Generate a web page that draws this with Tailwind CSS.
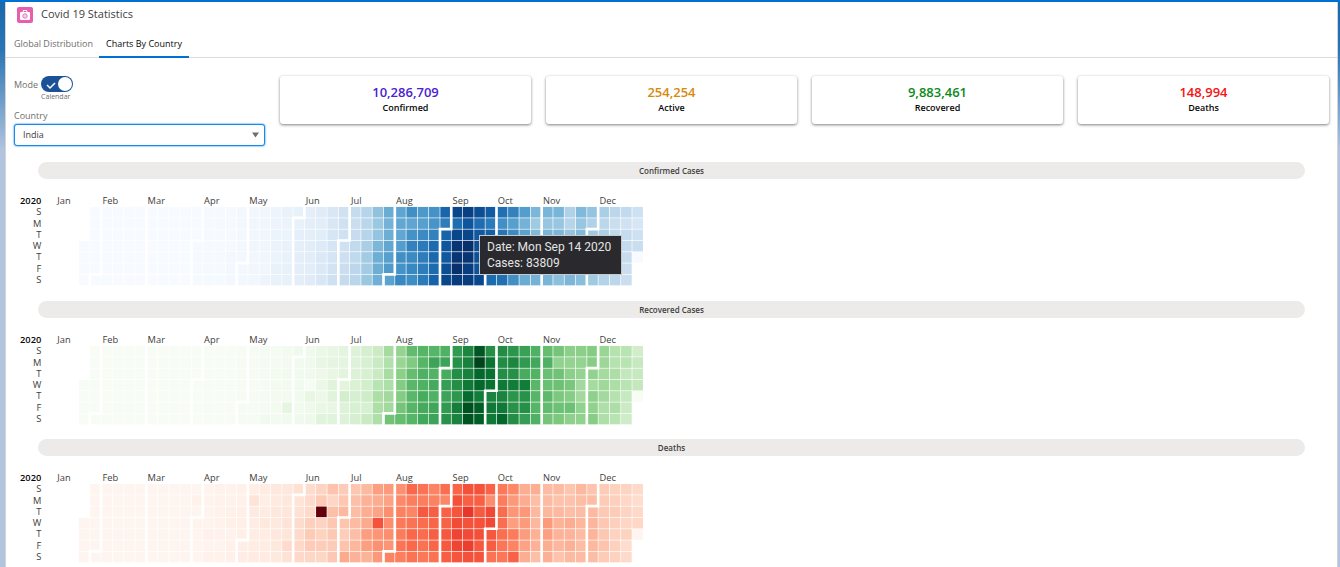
<!DOCTYPE html>
<html lang="en">
<head>
<meta charset="utf-8">
<title>Covid 19 Statistics</title>
<script src="https://cdn.jsdelivr.net/npm/@tailwindcss/browser@4"></script>
</head>
<body class="min-h-screen border-t-2 border-[#0070d2] bg-[linear-gradient(to_bottom,#1767ab_0px,#2b75b5_50px,#b0c4df_150px)] pl-[5px] pr-[2px] font-['Open_Sans',sans-serif] text-[9px] text-[#3e3e3c]">
<main class="relative min-h-[calc(100vh-2px)] border-x border-[#d4d4d4] bg-white">
  <header class="flex h-6 items-center gap-2 pl-[11px]">
    <svg class="mt-[2px] size-4" viewBox="0 0 48 48" aria-hidden="true">
      <rect width="48" height="48" rx="6" fill="#e45fae"/>
      <path fill="#fff" fill-rule="evenodd" d="M17 15v-3a3 3 0 0 1 3-3h8a3 3 0 0 1 3 3v3h5a3 3 0 0 1 3 3v18a3 3 0 0 1-3 3H12a3 3 0 0 1-3-3V18a3 3 0 0 1 3-3zm3 0h8v-3h-8z"/>
      <circle cx="24" cy="27" r="6.500" fill="none" stroke="#e45fae" stroke-width="3"/>
      <circle cx="24" cy="27" r="2" fill="#e45fae"/>
    </svg>
    <h1 class="text-[11px] leading-4">Covid 19 Statistics</h1>
  </header>
  <nav class="flex h-8 border-b border-[#dddbda] pl-[2px]" role="tablist">
    <button role="tab" aria-selected="false" class="px-[6px] pt-3 pb-2 leading-3 text-[#706e6b]">Global Distribution</button>
    <button role="tab" aria-selected="true" class="-mb-px border-b-2 border-[#0070d2] px-[7px] pt-3 pb-[7px] leading-3 font-medium text-[#080707]">Charts By Country</button>
  </nav>

  <section class="grid grid-cols-5 gap-[15px] pt-[18px] px-2">
    <form class="flex flex-col">
      <label class="flex items-start gap-[3px] text-[#706e6b]">
        <span class="pt-[3px] leading-3">Mode</span>
        <span class="flex flex-col">
          <span class="relative h-4 w-8">
            <input type="checkbox" checked aria-label="Mode" class="block h-4 w-8 appearance-none rounded-full bg-[#1b5297]">
            <svg class="pointer-events-none absolute inset-0 size-full" viewBox="0 0 32 16" aria-hidden="true"><circle cx="24" cy="8" r="7" fill="#fff"/><path d="M6 9l3 3 5-5" fill="none" stroke="#fff" stroke-width="1.500"/></svg>
          </span>
          <span class="text-[7px] leading-[9px]">Calendar</span>
        </span>
      </label>
      <label for="country" class="mt-[9px] leading-3 text-[#706e6b]">Country</label>
      <div class="relative mt-[2px]">
        <select id="country" class="block h-[22px] w-full appearance-none rounded-[3px] border border-[#1589ee] bg-white pl-2 text-[9px] text-[#3e3e3c] shadow-[0_0_2px_#0070d2]"><option>India</option></select>
        <svg class="pointer-events-none absolute top-2 right-[6px] h-[6px] w-[7px]" viewBox="0 0 7 6" aria-hidden="true"><path d="M0 0.500h7L3.500 5.500z" fill="#706e6b"/></svg>
      </div>
    </form>
    <article class="h-12 rounded-[3px] pt-2 text-center text-[#080707] shadow-[0_1px_3px_rgba(0,0,0,0.5)]"><p class="text-[13px] leading-4 font-semibold text-[#4a22d4]">10,286,709</p><p class="leading-4 font-semibold">Confirmed</p></article>
    <article class="h-12 rounded-[3px] pt-2 text-center text-[#080707] shadow-[0_1px_3px_rgba(0,0,0,0.5)]"><p class="text-[13px] leading-4 font-semibold text-[#d68a0c]">254,254</p><p class="leading-4 font-semibold">Active</p></article>
    <article class="h-12 rounded-[3px] pt-2 text-center text-[#080707] shadow-[0_1px_3px_rgba(0,0,0,0.5)]"><p class="text-[13px] leading-4 font-semibold text-[#0b8a20]">9,883,461</p><p class="leading-4 font-semibold">Recovered</p></article>
    <article class="h-12 rounded-[3px] pt-2 text-center text-[#080707] shadow-[0_1px_3px_rgba(0,0,0,0.5)]"><p class="text-[13px] leading-4 font-semibold text-[#f51414]">148,994</p><p class="leading-4 font-semibold">Deaths</p></article>
  </section>

  <div class="flex flex-col gap-[13px] pt-4">
    <section><h2 class="mr-8 ml-8 rounded-full bg-[#ecebea] text-center text-[8px] leading-[17px] font-semibold">Confirmed Cases</h2><svg id="confirmed" class="mt-[9px] ml-3 block h-auto w-[634px]" viewBox="0 0 954 150" role="img" aria-label="Confirmed cases calendar"></svg></section>
    <section><h2 class="mr-8 ml-8 rounded-full bg-[#ecebea] text-center text-[8px] leading-[17px] font-semibold">Recovered Cases</h2><svg id="recovered" class="mt-[9px] ml-3 block h-auto w-[634px]" viewBox="0 0 954 150" role="img" aria-label="Recovered cases calendar"></svg></section>
    <section><h2 class="mr-8 ml-8 rounded-full bg-[#ecebea] text-center text-[8px] leading-[17px] font-semibold">Deaths</h2><svg id="deaths" class="mt-[9px] ml-3 block h-auto w-[634px]" viewBox="0 0 954 150" role="img" aria-label="Deaths calendar"></svg></section>
  </div>

  <div role="tooltip" class="absolute top-[233px] left-[473px] border border-[#c9c9cc] bg-[#2a2a2e] py-[3px] pr-[10px] pl-[7px] font-['Roboto',sans-serif] text-[12px] leading-4 whitespace-nowrap text-[#e4e4e4]">Date: Mon Sep 14 2020<br>Cases: 83809</div>
</main>
<script>
// Daily values, Sunday to Saturday, one entry per week; each list starts at its first non-trivial week.
const series = {
  confirmed: {max: 98, first: 12, ramp: 'f7fbff deebf7 c6dbef 9ecae1 6baed6 4292c6 2171b5 08519c 08306b', weeks:
    '0 0 0 0 0 0 0|0 0 0 1 1 1 1|1 1 1 1 1 1 1|1 1 1 1 1 1 1|1 1 1 1 2 2 2|2 2 2 2 2 2 2|3 4 3 4 3 3 3|4 4 4 4 4 4 5|5 5 6 6 6 7 7|7 6 6 7 7 8 8|8 8 9 9 10 10 10|10 10 10 11 11 11 12|12 11 11 13 14 14 15|15 15 16 17 17 18 20|19 19 19 19 21 22 24|24 22 23 25 26 27 28|29 28 29 33 35 35 37|40 37 39 45 49 49 48|50 47 49 52 55 57 54|53 52 52 56 62 61 65|62 53 61 67 64 65 63|58 55 64 70 69 69 70|61 60 67 76 77 76 79|78 69 78 84 83 87 90|90 75 90 96 96 98 94|92 84 90 98 96 93 93|87 75 83 86 86 85 89|82 70 80 87 81 79 76|74 62 72 79 70 73 74|67 55 64 68 63 62 62|56 47 54 56 54 54 50|45 36 44 50 49 48 47|46 38 46 50 48 50 46|46 38 45 48 45 45 41|31 29 39 45 46 46 45|44 38 44 44 43 41 42|39 31 36 36 37 37 36|33 27 32 32 29 30 30|27 22 26 25 24 25 27|25 19 24 24 23 22 22|20 16 20 22 0 0 0'},
  recovered: {max: 101, first: 17, ramp: 'f7fcf5 e5f5e0 c7e9c0 a1d99b 74c476 41ab5d 238b45 006d2c 00441b', weeks:
    '1 1 1 1 1 1 1|1 1 1 1 1 1 1|2 2 2 1 2 2 4|2 2 3 3 3 3 3|3 3 4 3 3 11 4|5 4 4 4 4 4 5|5 5 5 1 10 6 6|8 10 7 8 7 9 14|10 11 10 14 14 10 14|12 12 13 12 20 15 15|15 15 16 17 19 18 19|19 18 18 20 22 18 24|23 24 24 30 34 33 33|36 32 35 33 37 37 51|41 40 44 46 46 50 54|55 47 54 57 57 58 58|58 58 60 60 62 63 64|58 66 59 63 60 65 66|60 66 62 68 66 70 73|70 74 75 75 71 81 79|78 80 80 83 88 97 96|95 101 90 90 82 93 93|75 85 86 86 79 83 83|76 76 75 83 79 83 90|72 78 74 82 72 73 75|67 70 62 82 73 74 68|60 64 59 57 58 58 60|54 60 53 53 56 55 50|50 42 51 52 48 52 48|44 41 44 49 45 52 43|44 41 41 37 37 42 42|46 45 42 36 43 42 45|40 39 36 38 37 33 33|31 31 34 34 31 34 30|30 30 26 30 25 23 22|21 25 25 26 0 0 0'},
  deaths: {max: 2003, first: 13, ramp: 'fff5f0 fee0d2 fcbba1 fc9272 fb6a4a ef3b2c cb181d a50f15 67000d', weeks:
    '2 40 3 20 14 14 13|20 20 25 20 48 22 40|30 35 30 30 30 23 40|37 34 52 48 37 57 47|60 61 69 71 75 77 90|82 194 125 90 104 96 116|112 81 121 136 98 104 118|154 131 146 134 148 142 142|156 148 172 190 177 269 205|222 201 221 259 275 286 295|260 270 277 357 396 389 311|325 395 2003 334 336 375 306|445 312 465 418 407 384 410|380 418 507 434 379 442 613|425 467 482 487 475 519 551|500 553 582 606 687 671 543|681 587 648 1129 740 757 708|705 654 768 775 783 736 853|760 803 857 904 886 933 861|1007 871 834 942 1007 996 944|941 876 1092 977 983 945 912|836 848 1059 1023 1057 1021 948|971 819 1045 1043 1096 1089 1065|1016 1133 1115 1172 1209 1201 1114|1136 1054 1290 1132 1174 1247 1133|1130 1053 1085 1129 1141 1089 1124|1039 776 1179 1181 1095 1069 940|903 884 986 971 964 926 918|816 706 730 680 895 837 1033|579 587 717 702 690 650 578|578 480 508 517 563 551 470|496 490 514 704 670 577 559|490 448 512 550 547 520 447|435 449 474 585 545 564 501|511 480 481 524 492 485 496|443 482 500 526 540 512 482|391 385 402 416 414 442 391|336 354 387 355 338 347 341|333 301 333 312 336 251 279|280 252 286 299 0 0 0'}
};
const CELL = 17;
// Basis spline through the ramp's colours.
function shade(ramp, t) {
  const c = ramp.map(h => [0, 2, 4].map(i => parseInt(h.slice(i, i + 2), 16)));
  const n = c.length - 1, i = Math.min(n - 1, Math.floor(t * n)), u = t * n - i;
  return 'rgb(' + [0, 1, 2].map(k => {
    const b = c[i][k], d = c[i + 1][k], a = i > 0 ? c[i - 1][k] : 2 * b - d, e = i < n - 1 ? c[i + 2][k] : 2 * d - b;
    return Math.round(((1 - 3*u + 3*u*u - u*u*u) * a + (4 - 6*u*u + 3*u*u*u) * b + (1 + 3*u + 3*u*u - 3*u*u*u) * d + u*u*u * e) / 6);
  }).join(',') + ')';
}
for (const [id, s] of Object.entries(series)) {
  const ramp = s.ramp.split(' '), weeks = s.weeks.split('|').map(w => w.split(' ').map(Number));
  let out = '<g transform="translate(40,28)" font-size="14" fill="#3e3e3c"><text x="-5" y="-4" text-anchor="end" font-weight="600" fill="#080707">2020</text>';
  [...'SMTWTFS'].forEach((d, i) => out += `<text x="-5" y="${i * CELL + 13}" text-anchor="end">${d}</text>`);
  for (let day = 21; day < 366; day++) {
    const w = Math.floor((day + 3) / 7), d = (day + 3) % 7, v = w < s.first ? 0 : weeks[w - s.first][d];
    out += `<rect x="${w * CELL + 0.5}" y="${d * CELL + 0.5}" width="16" height="16" fill="${shade(ramp, v / s.max)}"/>`;
  }
  let start = 0;
  'Jan Feb Mar Apr May Jun Jul Aug Sep Oct Nov Dec'.split(' ').forEach((m, i) => {
    const w = Math.floor((start + 3) / 7), d = (start + 3) % 7, x = w * CELL;
    if (i) out += `<path fill="none" stroke="#fff" stroke-width="4" d="${d === 0 ? `M${x},0` : `M${x + CELL},0V${d * CELL}H${x}`}V${7 * CELL}"/>`;
    out += `<text x="${(d ? x + CELL : x) + 2}" y="-4">${m}</text>`;
    start += new Date(2020, i + 1, 0).getDate();
  });
  document.getElementById(id).innerHTML = out + '</g>';
}
</script>
</body>
</html>
